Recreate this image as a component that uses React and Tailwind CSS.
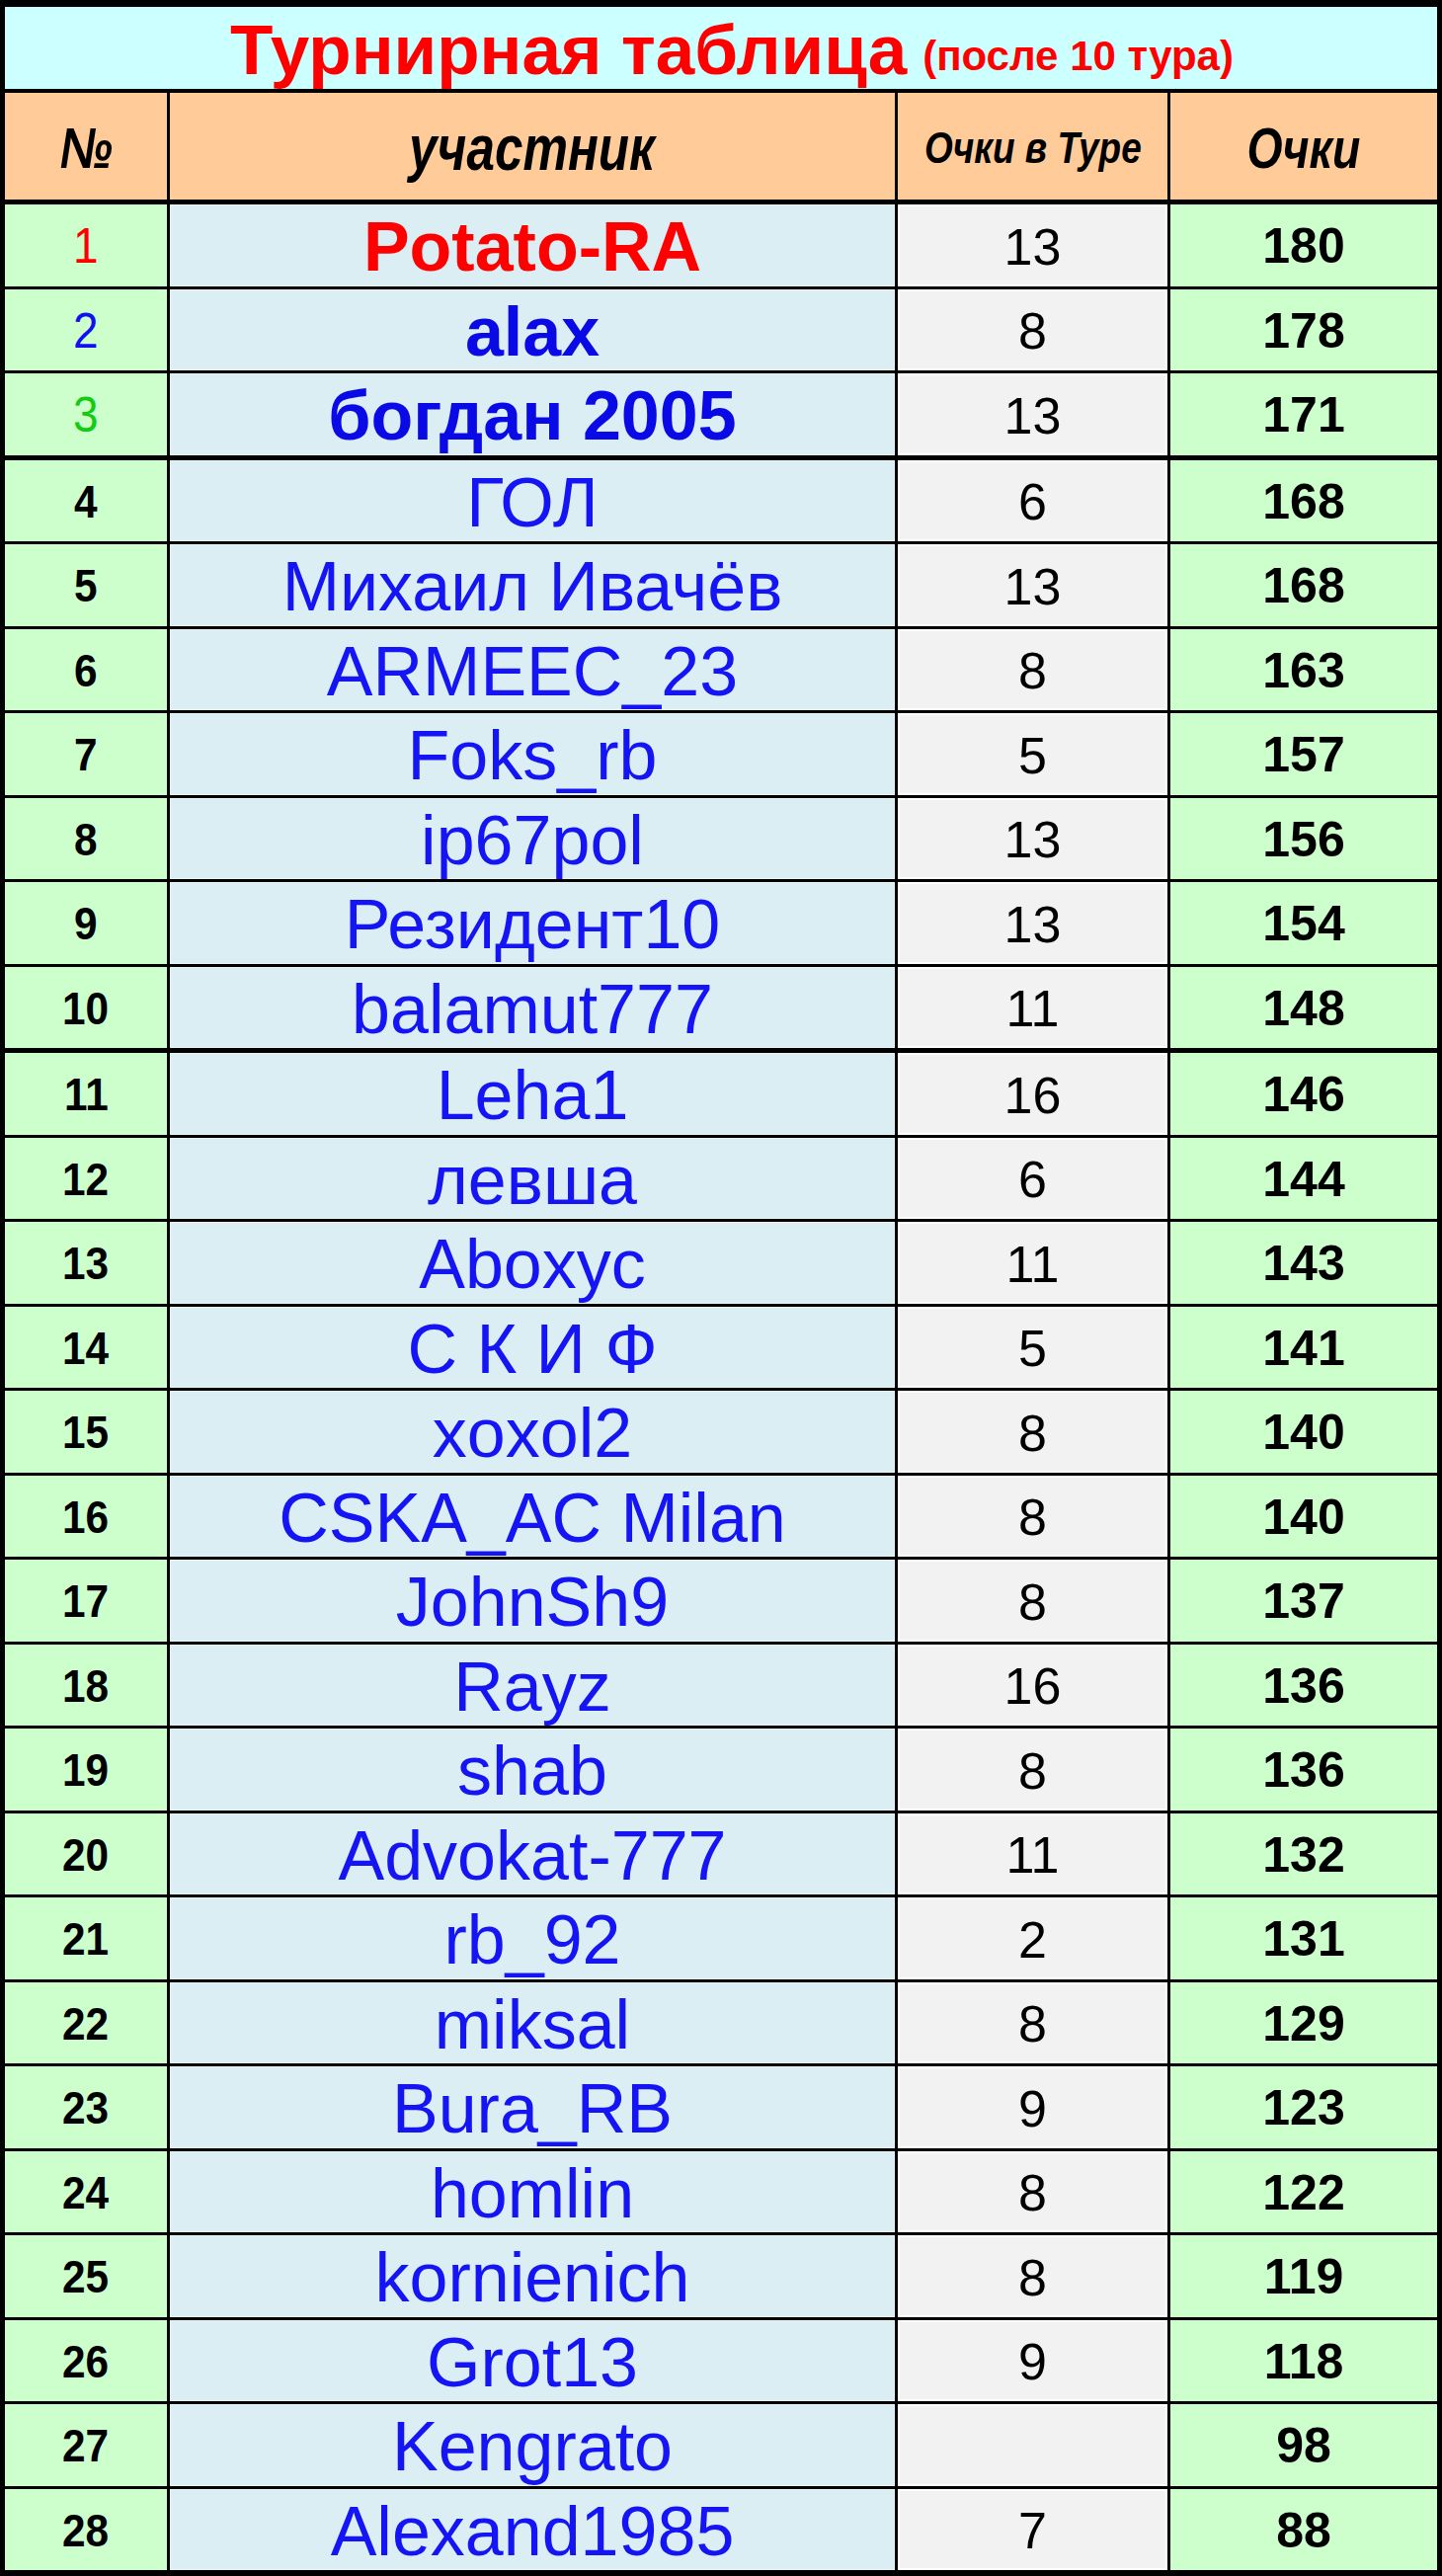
import React from "react";

const rows = [
  [1, "Potato-RA", "13", 180],
  [2, "alax", "8", 178],
  [3, "богдан 2005", "13", 171],
  [4, "ГОЛ", "6", 168],
  [5, "Михаил Ивачёв", "13", 168],
  [6, "ARMEEC_23", "8", 163],
  [7, "Foks_rb", "5", 157],
  [8, "ip67pol", "13", 156],
  [9, "Резидент10", "13", 154],
  [10, "balamut777", "11", 148],
  [11, "Leha1", "16", 146],
  [12, "левша", "6", 144],
  [13, "Aboxyc", "11", 143],
  [14, "С К И Ф", "5", 141],
  [15, "xoxol2", "8", 140],
  [16, "CSKA_AC Milan", "8", 140],
  [17, "JohnSh9", "8", 137],
  [18, "Rayz", "16", 136],
  [19, "shab", "8", 136],
  [20, "Advokat-777", "11", 132],
  [21, "rb_92", "2", 131],
  [22, "miksal", "8", 129],
  [23, "Bura_RB", "9", 123],
  [24, "homlin", "8", 122],
  [25, "kornienich", "8", 119],
  [26, "Grot13", "9", 118],
  [27, "Kengrato", "", 98],
  [28, "Alexand1985", "7", 88],
];

const arial = "font-['Liberation_Sans',Arial,sans-serif]";

function Row({ r }) {
  const [n, name, tour, pts] = r;
  const numColor =
    n === 1 ? "text-[#ff0000]" : n === 2 ? "text-[#1010f0]" : n === 3 ? "text-[#11cc11]" : "text-black";
  const nameCls =
    n === 1
      ? "text-[#ff0000] font-bold"
      : n <= 3
      ? "text-[#0a0ae6] font-bold"
      : "text-[#1414f5] font-normal";
  const numWeight = n <= 3 ? "font-normal text-[50px]" : "font-bold text-[46px]";
  const mt = n === 1 ? "" : n === 4 || n === 11 ? "mt-[5px]" : "mt-[3px]";
  return (
    <div className={`grid grid-cols-[164px_734px_273px_270px] gap-x-[3px] h-[82.5px] ${mt}`}>
      <div className={`bg-[#ccffcc] flex items-center justify-center pt-[2px] ${arial} ${numWeight} ${numColor} leading-none`}>
        <span className="inline-block scale-x-[0.92]">{n}</span>
      </div>
      <div className={`bg-[#daeef3] shadow-[inset_0_0_0_1px_#e6f3f7] flex items-center justify-center pt-[4px] ${arial} ${nameCls} text-[70px] leading-none whitespace-nowrap`}>
        {name}
      </div>
      <div className={`bg-[#f2f2f2] shadow-[inset_0_0_0_2px_#ffffff] flex items-center justify-center pt-[3px] ${arial} text-black text-[52px] leading-none`}>
        {tour}
      </div>
      <div className={`bg-[#ccffcc] flex items-center justify-center pt-[2px] ${arial} font-bold text-black text-[50px] leading-none`}>
        {pts}
      </div>
    </div>
  );
}

export default function App() {
  return (
    <div className="w-[1460px] h-[2608px] bg-black pt-[7px] px-[5px] pb-[6px] flex flex-col">
      <div className="h-[83px] bg-[#ccffff] flex items-center justify-center pt-[4px] pl-[22px]">
        <span className={`${arial} font-bold text-[#ff0000] text-[71px] leading-none`}>Турнирная таблица</span>
        <span className={`${arial} font-bold text-[#ff0000] text-[42px] leading-none ml-[16px] mt-[12px]`}>(после 10 тура)</span>
      </div>
      <div className="grid grid-cols-[164px_734px_273px_270px] gap-x-[3px] h-[108px] mt-[4px]">
        <div className={`bg-[#ffcc99] flex items-center justify-center pt-[4px] ${arial} font-bold italic text-[58px] leading-none`}>
          <span className="inline-block scale-x-[0.8]">№</span>
        </div>
        <div className={`bg-[#ffcc99] flex items-center justify-center pt-[4px] ${arial} font-bold italic text-[64px] leading-none`}>
          <span className="inline-block scale-x-[0.8]">участник</span>
        </div>
        <div className={`bg-[#ffcc99] flex items-center justify-center pt-[4px] ${arial} font-bold italic text-[44px] leading-none whitespace-nowrap`}>
          <span className="inline-block scale-x-[0.84]">Очки в Туре</span>
        </div>
        <div className={`bg-[#ffcc99] flex items-center justify-center pt-[4px] ${arial} font-bold italic text-[58px] leading-none`}>
          <span className="inline-block scale-x-[0.8]">Очки</span>
        </div>
      </div>
      <div className="mt-[5px] flex flex-col">
        {rows.map((r) => (
          <Row key={r[0]} r={r} />
        ))}
      </div>
    </div>
  );
}
